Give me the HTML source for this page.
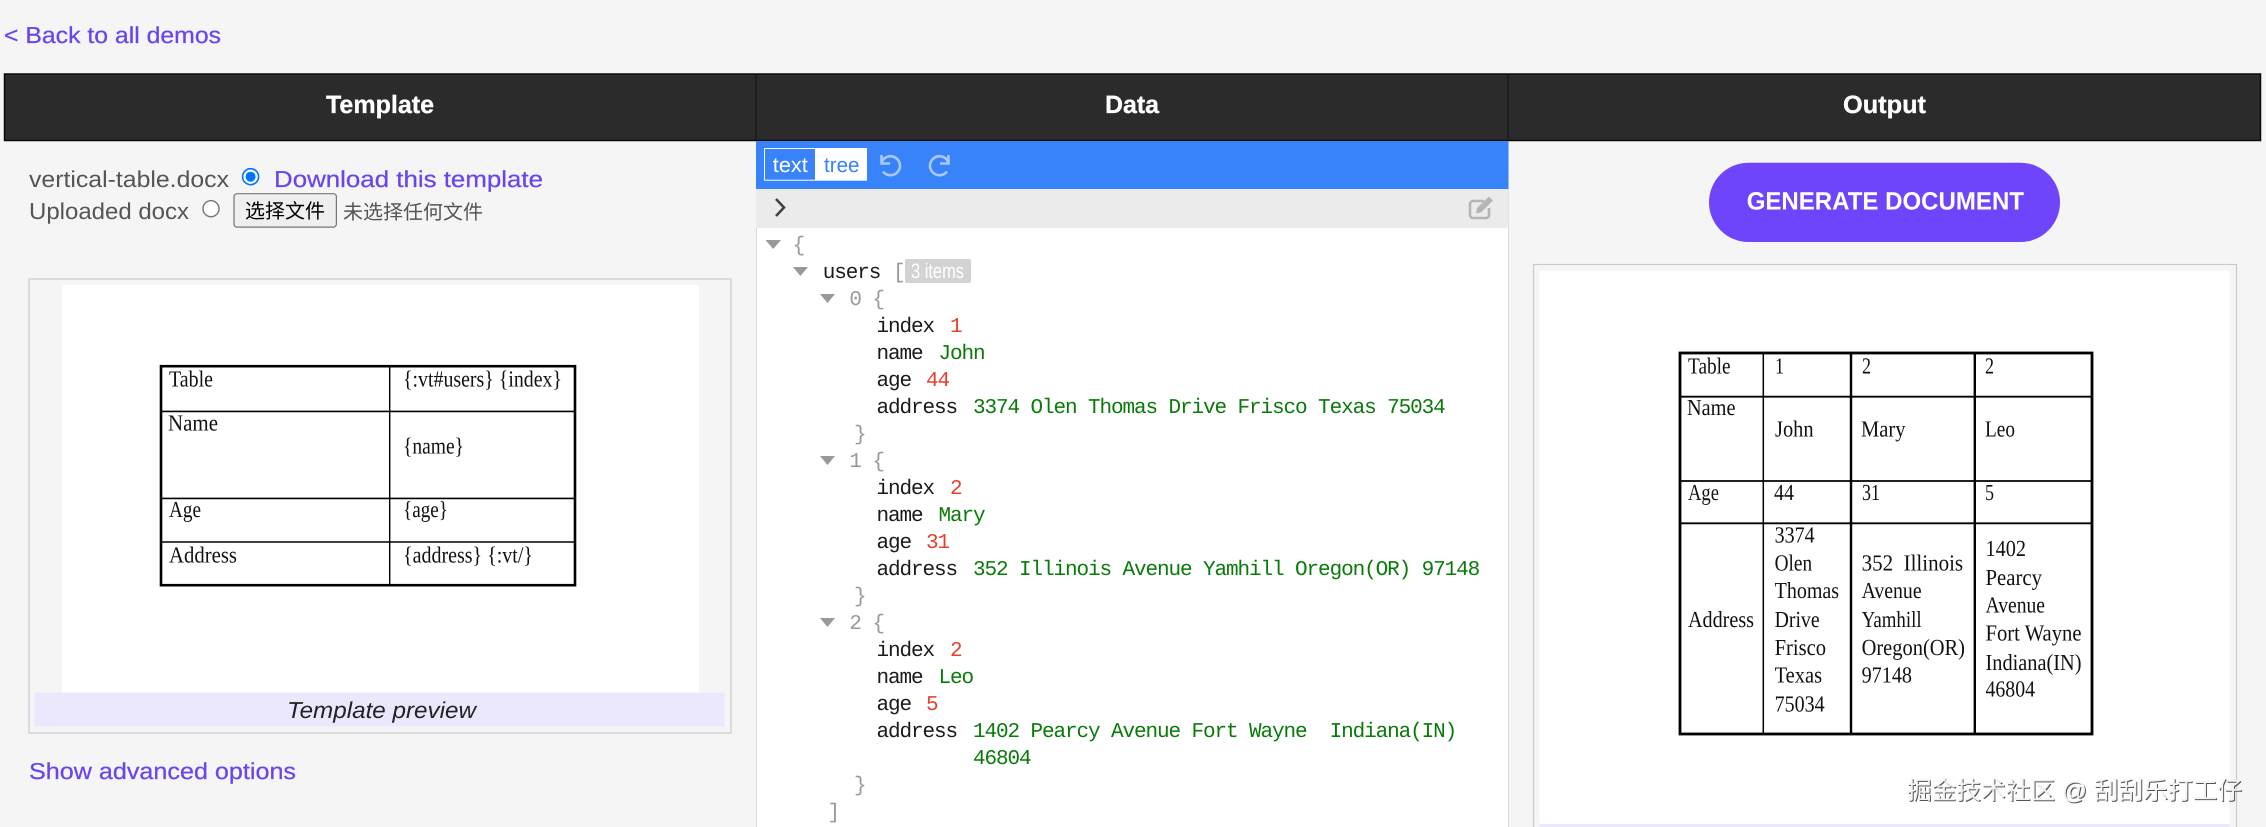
<!DOCTYPE html>
<html lang="en">
<head>
<meta charset="utf-8">
<title>Vertical table demo</title>
<style>
html,body{margin:0;padding:0;background:#f5f5f5;width:2266px;height:827px;overflow:hidden}
svg{display:block}
text{white-space:pre;text-rendering:geometricPrecision}
.s{font-family:"Liberation Sans",sans-serif}
.lnk{font-size:23px;fill:#6a45ee;stroke:#6a45ee;stroke-width:.25px}
.g{font-size:23px;fill:#555}
.h{font-size:25px;font-weight:700;fill:#fff;stroke:#fff;stroke-width:.3px}
.t{font-family:"Liberation Serif",serif;font-size:23px;fill:#111}
.m{font-family:"Liberation Mono",monospace;font-size:21px;letter-spacing:-1.1px}
.k{fill:#1a1a1a}.n{fill:#e5402e}.v{fill:#0a7a0a}.p{fill:#999}
.cjk{font-family:"Liberation Sans","Noto Sans CJK SC",sans-serif}
</style>
</head>
<body>
<svg xmlns="http://www.w3.org/2000/svg" width="2266" height="827" viewBox="0 0 2266 827">
<rect width="2266" height="827" fill="#f5f5f5"/>

<!-- back link -->
<text class="s lnk" x="4" y="43" textLength="217" lengthAdjust="spacingAndGlyphs">&lt; Back to all demos</text>

<!-- header bar -->
<rect x="4.5" y="74" width="2256" height="66.5" fill="#2b2b2b" stroke="#0a0a0a" stroke-width="1.5"/>
<rect x="755.5" y="74" width="1" height="66" fill="#111"/>
<rect x="1507.5" y="74" width="1" height="66" fill="#111"/>
<text class="s h" x="326" y="113" textLength="108" lengthAdjust="spacingAndGlyphs">Template</text>
<text class="s h" x="1105" y="113" textLength="54" lengthAdjust="spacingAndGlyphs">Data</text>
<text class="s h" x="1843" y="113" textLength="83" lengthAdjust="spacingAndGlyphs">Output</text>

<!-- template column -->
<text class="s g" x="29" y="187" textLength="200" lengthAdjust="spacingAndGlyphs">vertical-table.docx</text>
<circle cx="250.6" cy="176.7" r="8" fill="#fff" stroke="#0075ff" stroke-width="1.6"/>
<circle cx="250.6" cy="176.7" r="5" fill="#0075ff"/>
<text class="s lnk" x="274" y="187" textLength="269" lengthAdjust="spacingAndGlyphs">Download this template</text>
<text class="s g" x="29" y="219" textLength="160" lengthAdjust="spacingAndGlyphs">Uploaded docx</text>
<circle cx="211" cy="208.7" r="8" fill="#fff" stroke="#767676" stroke-width="1.4"/>
<rect x="234" y="193.7" width="102.4" height="33.4" rx="3" fill="#efefef" stroke="#767676" stroke-width="1.2"/>
<text class="cjk" x="245" y="218" font-size="20" fill="#000">选择文件</text>
<text class="cjk" x="343" y="219" font-size="20" fill="#555">未选择任何文件</text>

<!-- template preview -->
<rect x="29" y="279" width="702" height="454" fill="#f5f5f5" stroke="#cbcbcb" stroke-width="1.2"/>
<rect x="62" y="285" width="637" height="408" fill="#fff"/>
<rect x="34.4" y="692.7" width="690.3" height="33.8" fill="#ebe8fd"/>
<text class="s" x="287" y="718" font-size="23" font-style="italic" fill="#222" textLength="189" lengthAdjust="spacingAndGlyphs">Template preview</text>

<g fill="none" stroke="#000">
<rect x="161" y="366.2" width="414" height="219" stroke-width="2.6"/>
<path d="M389.7 366V585" stroke-width="1.4"/>
<path d="M161 411.4H575M161 498.4H575M161 542H575" stroke-width="1.6"/>
</g>
<text class="t" x="169" y="386.5" textLength="44" lengthAdjust="spacingAndGlyphs">Table</text>
<text class="t" x="403" y="386.5" textLength="159" lengthAdjust="spacingAndGlyphs">{:vt#users} {index}</text>
<text class="t" x="168" y="430.6" textLength="50" lengthAdjust="spacingAndGlyphs">Name</text>
<text class="t" x="403" y="453.7" textLength="61" lengthAdjust="spacingAndGlyphs">{name}</text>
<text class="t" x="169" y="517" textLength="32" lengthAdjust="spacingAndGlyphs">Age</text>
<text class="t" x="403" y="517" textLength="45" lengthAdjust="spacingAndGlyphs">{age}</text>
<text class="t" x="169" y="562.7" textLength="68" lengthAdjust="spacingAndGlyphs">Address</text>
<text class="t" x="403" y="562.7" textLength="130" lengthAdjust="spacingAndGlyphs">{address} {:vt/}</text>

<text class="s lnk" x="29" y="779" textLength="267" lengthAdjust="spacingAndGlyphs">Show advanced options</text>

<!-- data column -->
<rect x="756" y="141" width="752" height="686" fill="#fff"/>
<rect x="756" y="189" width="1" height="638" fill="#d8d8d8"/>
<rect x="1508" y="189" width="1" height="638" fill="#d8d8d8"/>
<rect x="756" y="141" width="752.5" height="48" fill="#3883fa"/>
<rect x="756" y="189" width="752.5" height="39" fill="#ebebeb"/>
<rect x="764" y="148" width="103" height="32.7" fill="#fff"/>
<rect x="765" y="149" width="50" height="30.7" fill="#3883fa"/>
<text class="s" x="772.8" y="172" font-size="21" fill="#fff" textLength="35" lengthAdjust="spacingAndGlyphs">text</text>
<text class="s" x="824" y="172" font-size="21" fill="#3883fa" textLength="35.5" lengthAdjust="spacingAndGlyphs">tree</text>
<g fill="none" stroke="#a9c9fb" stroke-width="2.6">
<path d="M882 161.5A9.5 9.5 0 1 1 883 171.5"/>
<path d="M881.5 155V163.5H890"/>
<path d="M948 161.5A9.5 9.5 0 1 0 947 171.5"/>
<path d="M948.5 155V163.5H940"/>
</g>
<path d="M776 199L784 207.5L776 216" fill="none" stroke="#444" stroke-width="2.6"/>
<g fill="none" stroke="#b5b5b5" stroke-width="2.6">
<path d="M1484 201H1473a3 3 0 0 0-3 3V215a3 3 0 0 0 3 3H1486a3 3 0 0 0 3-3V208"/>
</g>
<path d="M1476 213.5L1477 208L1489 196.5L1493 200.5L1481 212.5Z" fill="#b5b5b5"/>

<!-- tree -->
<g fill="#999">
<path d="M765.5 240H781L773.2 249Z"/>
<path d="M793 267H808L800.4 276Z"/>
<path d="M820 294H835L827.5 303Z"/>
<path d="M820 456H835L827.5 465Z"/>
<path d="M820 618H835L827.5 627Z"/>
</g>
<text class="m p" x="792.6" y="251">{</text>
<text class="m k" x="822.7" y="278">users</text>
<text class="m p" x="893" y="278">[</text>
<rect x="905" y="259" width="66" height="24" rx="2" fill="#d3d3d3"/>
<text class="s" x="911" y="278" font-size="21" fill="#fff" textLength="53" lengthAdjust="spacingAndGlyphs">3 items</text>

<text class="m p" x="849.4" y="305">0 {</text>
<text class="m k" x="876.5" y="332">index</text><text class="m n" x="950" y="332">1</text>
<text class="m k" x="876.5" y="359">name</text><text class="m v" x="938.5" y="359">John</text>
<text class="m k" x="876.5" y="386">age</text><text class="m n" x="926" y="386">44</text>
<text class="m k" x="876.5" y="413">address</text><text class="m v" x="973" y="413">3374 Olen Thomas Drive Frisco Texas 75034</text>
<text class="m p" x="854" y="440">}</text>

<text class="m p" x="849.4" y="467">1 {</text>
<text class="m k" x="876.5" y="494">index</text><text class="m n" x="950" y="494">2</text>
<text class="m k" x="876.5" y="521">name</text><text class="m v" x="938.5" y="521">Mary</text>
<text class="m k" x="876.5" y="548">age</text><text class="m n" x="926" y="548">31</text>
<text class="m k" x="876.5" y="575">address</text><text class="m v" x="973" y="575">352 Illinois Avenue Yamhill Oregon(OR) 97148</text>
<text class="m p" x="854" y="602">}</text>

<text class="m p" x="849.4" y="629">2 {</text>
<text class="m k" x="876.5" y="656">index</text><text class="m n" x="950" y="656">2</text>
<text class="m k" x="876.5" y="683">name</text><text class="m v" x="938.5" y="683">Leo</text>
<text class="m k" x="876.5" y="710">age</text><text class="m n" x="926" y="710">5</text>
<text class="m k" x="876.5" y="737">address</text><text class="m v" x="973" y="737">1402 Pearcy Avenue Fort Wayne  Indiana(IN)</text>
<text class="m v" x="973" y="764">46804</text>
<text class="m p" x="854" y="791">}</text>
<text class="m p" x="827.5" y="818">]</text>

<!-- output column -->
<rect x="1709" y="162.7" width="351" height="79.3" rx="39.6" fill="#6f45fb"/>
<text class="s" x="1746.7" y="209.3" font-size="25" font-weight="700" fill="#fff" textLength="277.3" lengthAdjust="spacingAndGlyphs">GENERATE DOCUMENT</text>
<rect x="1533.5" y="264.5" width="703" height="580" fill="#f5f5f5" stroke="#cbcbcb" stroke-width="1.2"/>
<rect x="1539.6" y="270.7" width="689.9" height="553.3" fill="#fff"/>
<rect x="1539.6" y="824" width="690" height="3" fill="#ebe8fd"/>

<g fill="none" stroke="#000">
<rect x="1680" y="353" width="412" height="381" stroke-width="2.8"/>
<path d="M1763.3 352V734" stroke-width="1.5"/>
<path d="M1851 352V734M1974.8 352V734" stroke-width="2.4"/>
<path d="M1680 396.7H2092M1680 481H2092M1680 523.3H2092" stroke-width="1.8"/>
</g>
<text class="t" x="1688" y="373.3" textLength="42.6" lengthAdjust="spacingAndGlyphs">Table</text>
<text class="t" x="1775" y="373.3" textLength="9" lengthAdjust="spacingAndGlyphs">1</text>
<text class="t" x="1862" y="373.3" textLength="9" lengthAdjust="spacingAndGlyphs">2</text>
<text class="t" x="1985" y="373.3" textLength="9" lengthAdjust="spacingAndGlyphs">2</text>
<text class="t" x="1687" y="415" textLength="48.5" lengthAdjust="spacingAndGlyphs">Name</text>
<text class="t" x="1775" y="436.7" textLength="38.6" lengthAdjust="spacingAndGlyphs">John</text>
<text class="t" x="1861" y="436.7" textLength="44.5" lengthAdjust="spacingAndGlyphs">Mary</text>
<text class="t" x="1985" y="436.7" textLength="30" lengthAdjust="spacingAndGlyphs">Leo</text>
<text class="t" x="1688" y="500" textLength="31" lengthAdjust="spacingAndGlyphs">Age</text>
<text class="t" x="1774" y="500" textLength="20" lengthAdjust="spacingAndGlyphs">44</text>
<text class="t" x="1862" y="500" textLength="18" lengthAdjust="spacingAndGlyphs">31</text>
<text class="t" x="1985" y="500" textLength="9" lengthAdjust="spacingAndGlyphs">5</text>
<text class="t" x="1688" y="627" textLength="66" lengthAdjust="spacingAndGlyphs">Address</text>

<text class="t" x="1774.6" y="542.7" textLength="40" lengthAdjust="spacingAndGlyphs">3374</text>
<text class="t" x="1774.6" y="570.7" textLength="37.5" lengthAdjust="spacingAndGlyphs">Olen</text>
<text class="t" x="1774.6" y="598" textLength="64.5" lengthAdjust="spacingAndGlyphs">Thomas</text>
<text class="t" x="1774.6" y="627" textLength="45" lengthAdjust="spacingAndGlyphs">Drive</text>
<text class="t" x="1774.6" y="655" textLength="51.5" lengthAdjust="spacingAndGlyphs">Frisco</text>
<text class="t" x="1774.6" y="682.7" textLength="47.5" lengthAdjust="spacingAndGlyphs">Texas</text>
<text class="t" x="1774.6" y="711.7" textLength="50" lengthAdjust="spacingAndGlyphs">75034</text>

<text class="t" x="1861.6" y="570.7" textLength="101.5" lengthAdjust="spacingAndGlyphs">352&#160;&#160;Illinois</text>
<text class="t" x="1861.6" y="598" textLength="60" lengthAdjust="spacingAndGlyphs">Avenue</text>
<text class="t" x="1861.6" y="627" textLength="60" lengthAdjust="spacingAndGlyphs">Yamhill</text>
<text class="t" x="1861.6" y="655" textLength="103.4" lengthAdjust="spacingAndGlyphs">Oregon(OR)</text>
<text class="t" x="1861.6" y="682.7" textLength="50.4" lengthAdjust="spacingAndGlyphs">97148</text>

<text class="t" x="1985.5" y="556" textLength="40.5" lengthAdjust="spacingAndGlyphs">1402</text>
<text class="t" x="1985.5" y="585" textLength="56.5" lengthAdjust="spacingAndGlyphs">Pearcy</text>
<text class="t" x="1985.5" y="612.7" textLength="59.5" lengthAdjust="spacingAndGlyphs">Avenue</text>
<text class="t" x="1985.5" y="640.7" textLength="96" lengthAdjust="spacingAndGlyphs">Fort Wayne</text>
<text class="t" x="1985.5" y="670" textLength="96" lengthAdjust="spacingAndGlyphs">Indiana(IN)</text>
<text class="t" x="1985.5" y="696.7" textLength="49.5" lengthAdjust="spacingAndGlyphs">46804</text>

<!-- watermark -->
<text class="cjk" x="1907" y="799" font-size="24.7" fill="#555" transform="translate(1 1)" textLength="335" lengthAdjust="spacingAndGlyphs">掘金技术社区 @ 刮刮乐打工仔</text>
<text class="cjk" x="1907" y="799" font-size="24.7" fill="#f4f4f4" textLength="335" lengthAdjust="spacingAndGlyphs">掘金技术社区 @ 刮刮乐打工仔</text>
</svg>
</body>
</html>
